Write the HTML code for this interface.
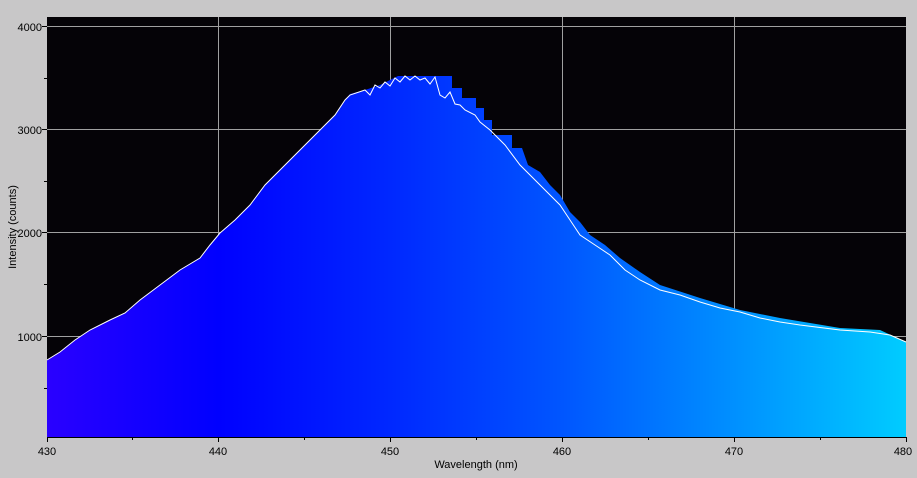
<!DOCTYPE html>
<html><head><meta charset="utf-8"><style>
html,body{margin:0;padding:0;background:#c8c7c8;}
svg{display:block;}
text{font-family:"Liberation Sans",sans-serif;font-size:11px;fill:#000;}
</style></head><body>
<svg width="917" height="478" viewBox="0 0 917 478">
<defs>
<linearGradient id="g" x1="47" x2="906" y1="0" y2="0" gradientUnits="userSpaceOnUse">
<stop offset="0" stop-color="#2a00ff"/>
<stop offset="0.2" stop-color="#0000ff"/>
<stop offset="0.4" stop-color="#0028ff"/>
<stop offset="0.6" stop-color="#0056ff"/>
<stop offset="0.8" stop-color="#0090ff"/>
<stop offset="1" stop-color="#00ccff"/>
</linearGradient>
</defs>
<rect x="47" y="17" width="859" height="420" fill="#050307"/>
<g stroke="#a0a0a0" stroke-width="1">
<line x1="47" x2="906" y1="26.5" y2="26.5"/>
<line x1="47" x2="906" y1="129.5" y2="129.5"/>
<line x1="47" x2="906" y1="232.5" y2="232.5"/>
<line x1="47" x2="906" y1="336.5" y2="336.5"/>
<line x1="218.5" x2="218.5" y1="17" y2="437"/>
<line x1="390.5" x2="390.5" y1="17" y2="437"/>
<line x1="562.5" x2="562.5" y1="17" y2="437"/>
<line x1="734.5" x2="734.5" y1="17" y2="437"/>
</g>
<polygon fill="url(#g)" points="47,437 47,360 60,352 75,340 90,330 110,320 125,313 140,300 160,285 180,270 200,258 210,245 220,233 235,220 250,205 265,185 280,170 300,150 320,130 335,115 345,100 350,94 365,90 380,85 398,76 452,76 452,88 462,88 462,98 476,98 476,108 484,108 484,120 492,120 492,135 512,135 512,148 522,148 528,165 540,172 550,185 560,195 570,212 580,222 590,235 605,245 620,258 640,272 660,285 700,298 740,310 780,318 840,328 880,330 906,342 906,437"/>
<polyline fill="none" stroke="#fff" stroke-width="1" points="47,360 60,352 75,340 90,330 110,320 125,313 140,300 160,285 180,270 200,258 210,245 220,233 235,220 250,205 265,185 280,170 300,150 320,130 335,115 345,100 350,95 365,90 370,95 375,85 380,88 385,82 390,86 395,78 400,82 405,76 410,80 415,76 420,80 425,78 430,84 435,77 440,95 445,98 450,92 455,104 460,105 465,110 475,115 480,122 490,130 505,145 520,165 535,180 550,195 560,205 570,220 580,235 595,245 610,255 625,270 640,280 660,290 680,295 700,302 720,308 740,312 760,318 780,322 800,325 840,330 870,332 890,335 906,342"/>
<line x1="47" x2="906" y1="437.5" y2="437.5" stroke="#000"/>
<g stroke="#000">
<line x1="42" x2="47" y1="26.5" y2="26.5"/><line x1="44" x2="47" y1="78.5" y2="78.5"/>
<line x1="42" x2="47" y1="129.5" y2="129.5"/><line x1="44" x2="47" y1="181.5" y2="181.5"/>
<line x1="42" x2="47" y1="232.5" y2="232.5"/><line x1="44" x2="47" y1="284.5" y2="284.5"/>
<line x1="42" x2="47" y1="336.5" y2="336.5"/><line x1="44" x2="47" y1="388.5" y2="388.5"/>
<line x1="47.5" x2="47.5" y1="437" y2="442"/><line x1="132.5" x2="132.5" y1="437" y2="440"/>
<line x1="218.5" x2="218.5" y1="437" y2="442"/><line x1="304.5" x2="304.5" y1="437" y2="440"/>
<line x1="390.5" x2="390.5" y1="437" y2="442"/><line x1="476.5" x2="476.5" y1="437" y2="440"/>
<line x1="562.5" x2="562.5" y1="437" y2="442"/><line x1="648.5" x2="648.5" y1="437" y2="440"/>
<line x1="734.5" x2="734.5" y1="437" y2="442"/><line x1="820.5" x2="820.5" y1="437" y2="440"/>
<line x1="906.5" x2="906.5" y1="437" y2="442"/>
</g>
<g text-anchor="end">
<text x="42" y="31">4000</text><text x="42" y="134">3000</text>
<text x="42" y="237">2000</text><text x="42" y="341">1000</text>
</g>
<g text-anchor="middle">
<text x="47" y="455">430</text><text x="218" y="455">440</text><text x="390" y="455">450</text>
<text x="562" y="455">460</text><text x="734" y="455">470</text><text x="903" y="455">480</text>
<text x="476" y="468">Wavelength (nm)</text>
<text transform="translate(16,227) rotate(-90)">Intensity (counts)</text>
</g>
</svg>
</body></html>
